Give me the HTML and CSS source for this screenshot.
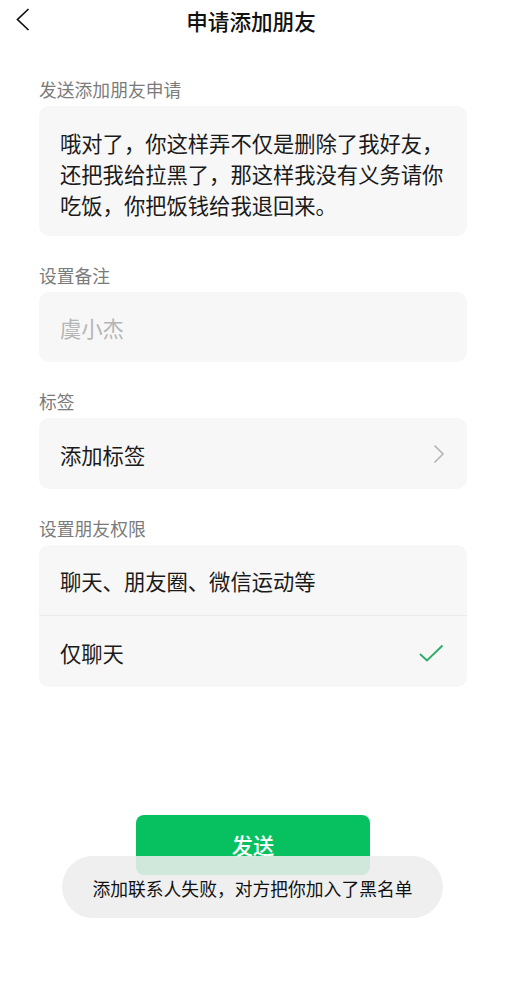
FILE: index.html
```html
<!DOCTYPE html>
<html lang="zh-CN">
<head>
<meta charset="utf-8">
<title>申请添加朋友</title>
<link rel="stylesheet" href="styles.css">
</head>
<body>
<div class="page">
  <header class="nav">
    <svg class="back" width="44" height="40" viewBox="0 0 44 40"><polyline points="28.5,9 17.5,19.5 28.5,30" fill="none" stroke="#111" stroke-width="1.7" stroke-linejoin="miter"/></svg>
    <h1 class="title">申请添加朋友</h1>
  </header>
  <main class="form">
    <section class="group first">
      <div class="label">发送添加朋友申请</div>
      <div class="card message">哦对了，你这样弄不仅是删除了我好友，还把我给拉黑了，那这样我没有义务请你吃饭，你把饭钱给我退回来。</div>
    </section>
    <section class="group">
      <div class="label">设置备注</div>
      <div class="card"><div class="row placeholder">虞小杰</div></div>
    </section>
    <section class="group">
      <div class="label">标签</div>
      <div class="card">
        <div class="row">
          <span>添加标签</span>
          <svg class="chev" width="12" height="20" viewBox="0 0 12 20"><polyline points="1.5,1.5 10,10 1.5,18.5" fill="none" stroke="#b2b2b2" stroke-width="1.5"/></svg>
        </div>
      </div>
    </section>
    <section class="group">
      <div class="label">设置朋友权限</div>
      <div class="card">
        <div class="row divided"><span>聊天、朋友圈、微信运动等</span></div>
        <div class="row">
          <span>仅聊天</span>
          <svg class="check" width="26" height="20" viewBox="0 0 26 20"><polyline points="2,11 9,17.5 24.5,2.5" fill="none" stroke="#2aae67" stroke-width="1.9"/></svg>
        </div>
      </div>
    </section>
    <div class="actions">
      <button class="send">发送</button>
    </div>
  </main>
  <div class="toast">添加联系人失败，对方把你加入了黑名单</div>
</div>
</body>
</html>
```

FILE: styles.css
```css
* { box-sizing: border-box; }
html, body { margin: 0; padding: 0; background: #fff; }
body {
  font-family: "Noto Sans CJK SC", "Noto Sans", sans-serif;
  color: #191919;
}
.page {
  position: relative;
  width: 508px;
  height: 1000px;
  overflow: hidden;
}
.nav {
  position: relative;
  height: 42px;
  padding-right: 6px;
  display: flex;
  align-items: center;
  justify-content: center;
}
.back {
  position: absolute;
  left: 0;
  top: 0;
}
.title {
  margin: 0;
  font-size: 21.6px;
  font-weight: 500;
  line-height: 40px;
  color: #111;
}
.form {
  padding: 0 41px 0 39px;
}
.group { margin-top: 27px; }
.group.first { margin-top: 34.5px; }
.label {
  font-size: 17.8px;
  line-height: 25px;
  color: #7b7b7b;
  margin-bottom: 4px;
}
.card {
  background: #f7f7f7;
  border-radius: 10px;
  overflow: hidden;
}
.message {
  font-size: 21.3px;
  line-height: 31px;
  padding: 21px 21px 16px 21px;
  color: #1a1a1a;
}
.row {
  height: 71px;
  padding: 2px 24px 0 21px;
  display: flex;
  align-items: center;
  justify-content: space-between;
  font-size: 21.3px;
  color: #1a1a1a;
}
.card .row:only-child.placeholder { height: 70px; }
.placeholder { color: #b5b5b5; }
.row.divided {
  border-bottom: 1px solid #ebebeb;
  height: 71.5px;
}
.chev { margin-right: -2px; }
.check { margin-right: -1px; margin-top: 0; }
.actions {
  display: flex;
  justify-content: center;
  margin-top: 128px;
}
.send {
  width: 234px;
  height: 60px;
  border: 0;
  border-radius: 8px;
  background: #07c160;
  color: #fff;
  font-family: "Noto Sans CJK SC", sans-serif;
  font-size: 21.3px;
  font-weight: 500;
  padding: 0 0 2px 0;
}
.toast {
  position: absolute;
  left: 62px;
  top: 856px;
  width: 381px;
  height: 62px;
  border-radius: 31px;
  background: rgba(237, 237, 237, 0.88);
  display: flex;
  align-items: center;
  justify-content: center;
  font-size: 17.8px;
  color: #111;
  padding-top: 2px;
}
```
